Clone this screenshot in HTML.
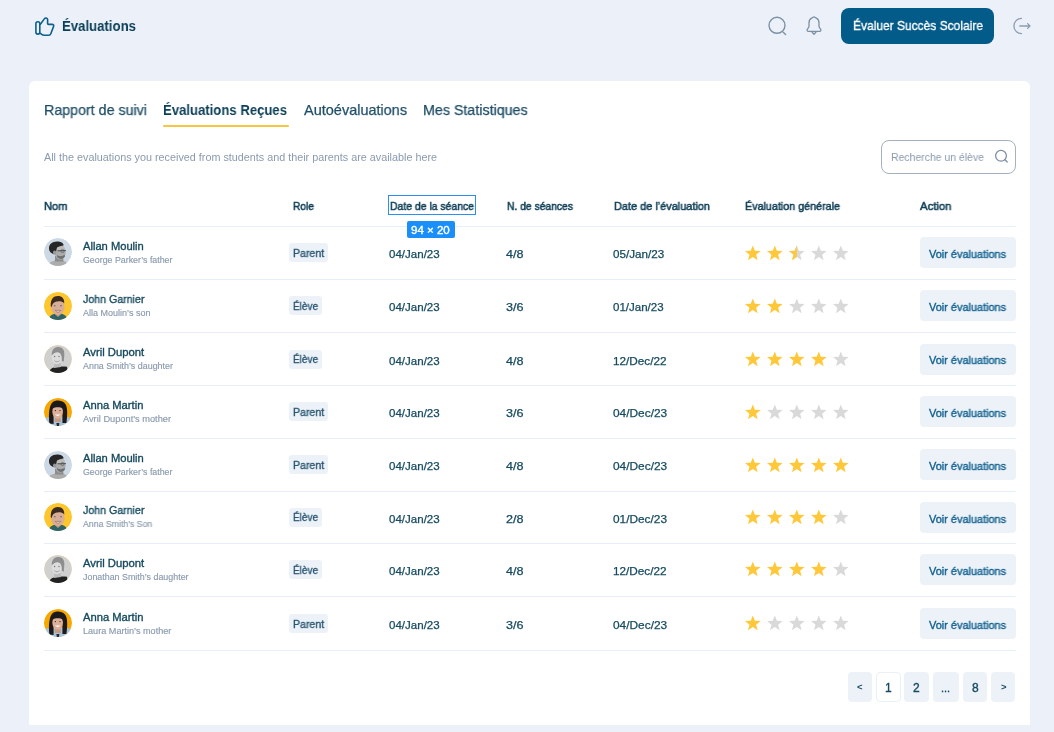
<!DOCTYPE html>
<html><head><meta charset="utf-8"><style>
html,body{margin:0;padding:0;}
body{width:1054px;height:732px;position:relative;overflow:hidden;background:#ECF1F9;font-family:"Liberation Sans",sans-serif;}
.t{position:absolute;white-space:nowrap;will-change:transform;}
.r{position:absolute;}
.a{position:absolute;overflow:visible;}
</style></head><body>
<svg class="a" style="left:32px;top:14px" width="26" height="24" viewBox="0 0 26 24"><g fill="none" stroke="#0D5F8B" stroke-width="1.6" stroke-linejoin="round" stroke-linecap="round"><rect x="3.9" y="7.7" width="3.9" height="12.4" rx="1.9"/><path d="M8.4 10.2 L12.3 4.9 C13.2 3.5 15.4 3.6 15.6 5.4 L15.6 9.4 Q15.6 10.4 16.6 10.4 L20.3 10.4 C21.4 10.4 22 11.4 21.6 12.4 L18.8 19.8 C18.4 20.8 17.7 21.3 16.8 21.3 L12.2 21.3 C11.2 21.3 10.4 21 9.7 20.4 L8.4 19.4"/></g></svg>
<div class="t" style="left:62.00px;top:16.30px;font-size:15px;line-height:19px;font-weight:700;color:#0B3E57;letter-spacing:0.000px;transform:scaleX(0.8786);transform-origin:0 0;">Évaluations</div>
<svg class="a" style="left:766px;top:15px" width="24" height="24" viewBox="0 0 24 24"><g fill="none" stroke="#7D90A6" stroke-width="1.4" stroke-linecap="round"><circle cx="11" cy="10.3" r="8"/><path d="M17.2 17.2 L19.6 19.6"/></g></svg>
<svg class="a" style="left:804px;top:15px" width="20" height="22" viewBox="0 0 20 22"><g fill="none" stroke="#7D90A6" stroke-width="1.3" stroke-linejoin="round"><path d="M10 1.9 C9.1 1.9 8.7 2.7 7.7 3.1 C5.8 3.9 5 5.6 5 8 L5 11.2 C5 12.8 3.4 13.6 3.1 14.8 C2.9 15.8 3.7 16.3 5 16.3 L15 16.3 C16.3 16.3 17.1 15.8 16.9 14.8 C16.6 13.6 15 12.8 15 11.2 L15 8 C15 5.6 14.2 3.9 12.3 3.1 C11.3 2.7 10.9 1.9 10 1.9 Z"/><path d="M7.6 16.5 L10 19.3 L12.4 16.5"/></g></svg>
<div class="r" style="left:841px;top:8px;width:153px;height:36px;background:#035B89;border-radius:8px;"></div>
<div class="t" style="left:853.40px;top:17.80px;font-size:13px;line-height:16px;font-weight:400;color:#FFFFFF;letter-spacing:0.000px;-webkit-text-stroke:0.35px #FFFFFF;transform:scaleX(0.9225);transform-origin:0 0;">Évaluer Succès Scolaire</div>
<svg class="a" style="left:1011px;top:15px" width="22" height="22" viewBox="0 0 22 22"><g fill="none" stroke="#8C9CB0" stroke-width="1.3" stroke-linecap="round" stroke-linejoin="round"><path d="M10.5 3.4 A7.6 7.6 0 1 0 10.5 18.6"/><path d="M8.8 11 L19 11 M16.6 8.6 L19 11 L16.6 13.4"/></g></svg>
<div class="r" style="left:28.9px;top:80.9px;width:1001.6px;height:644.1px;background:#FFFFFF;border-radius:6px;border-bottom-left-radius:0;border-bottom-right-radius:0;"></div>
<div class="t" style="left:44.40px;top:101.18px;font-size:14.5px;line-height:18px;font-weight:400;color:#1F4D66;letter-spacing:0.000px;-webkit-text-stroke:0.25px #1F4D66;transform:scaleX(0.9832);transform-origin:0 0;">Rapport de suivi</div>
<div class="t" style="left:163.30px;top:101.18px;font-size:14.5px;line-height:18px;font-weight:700;color:#0B3E57;letter-spacing:0.000px;transform:scaleX(0.9049);transform-origin:0 0;">Évaluations Reçues</div>
<div class="t" style="left:303.80px;top:101.18px;font-size:14.5px;line-height:18px;font-weight:400;color:#1F4D66;letter-spacing:0.000px;-webkit-text-stroke:0.25px #1F4D66;transform:scaleX(0.9984);transform-origin:0 0;">Autoévaluations</div>
<div class="t" style="left:422.80px;top:101.18px;font-size:14.5px;line-height:18px;font-weight:400;color:#1F4D66;letter-spacing:0.000px;-webkit-text-stroke:0.25px #1F4D66;transform:scaleX(0.9835);transform-origin:0 0;">Mes Statistiques</div>
<div class="r" style="left:163px;top:125px;width:125.5px;height:2px;background:#F7C53F;border-radius:1px;"></div>
<div class="t" style="left:44.20px;top:150.76px;font-size:10.5px;line-height:13px;font-weight:400;color:#8A9AAE;letter-spacing:0.000px;transform:scaleX(1.0280);transform-origin:0 0;">All the evaluations you received from students and their parents are available here</div>
<div class="r" style="left:881px;top:139.5px;width:135px;height:34px;background:#FFFFFF;border-radius:8px;box-sizing:border-box;border:1px solid #A3B1C1;"></div>
<div class="t" style="left:891.30px;top:150.29px;font-size:11px;line-height:14px;font-weight:400;color:#8A9AAE;letter-spacing:0.000px;transform:scaleX(0.9505);transform-origin:0 0;">Recherche un élève</div>
<svg class="a" style="left:993px;top:148px" width="17" height="17" viewBox="0 0 17 17"><g fill="none" stroke="#7D90A6" stroke-width="1.3" stroke-linecap="round"><circle cx="8" cy="7.8" r="5.4"/><path d="M12 11.8 L14.2 14"/></g></svg>
<div class="t" style="left:44.10px;top:199.12px;font-size:11.5px;line-height:14px;font-weight:400;color:#113F57;letter-spacing:0.000px;-webkit-text-stroke:0.55px #113F57;transform:scaleX(0.9644);transform-origin:0 0;">Nom</div>
<div class="t" style="left:292.60px;top:199.12px;font-size:11.5px;line-height:14px;font-weight:400;color:#113F57;letter-spacing:0.000px;-webkit-text-stroke:0.55px #113F57;transform:scaleX(0.8886);transform-origin:0 0;">Role</div>
<div class="t" style="left:390.00px;top:199.12px;font-size:11.5px;line-height:14px;font-weight:400;color:#113F57;letter-spacing:0.000px;-webkit-text-stroke:0.55px #113F57;transform:scaleX(0.9062);transform-origin:0 0;">Date de la séance</div>
<div class="t" style="left:506.70px;top:199.12px;font-size:11.5px;line-height:14px;font-weight:400;color:#113F57;letter-spacing:0.000px;-webkit-text-stroke:0.55px #113F57;transform:scaleX(0.8974);transform-origin:0 0;">N. de séances</div>
<div class="t" style="left:613.50px;top:199.12px;font-size:11.5px;line-height:14px;font-weight:400;color:#113F57;letter-spacing:0.000px;-webkit-text-stroke:0.55px #113F57;transform:scaleX(0.9502);transform-origin:0 0;">Date de l’évaluation</div>
<div class="t" style="left:744.80px;top:199.12px;font-size:11.5px;line-height:14px;font-weight:400;color:#113F57;letter-spacing:0.000px;-webkit-text-stroke:0.55px #113F57;transform:scaleX(0.9345);transform-origin:0 0;">Évaluation générale</div>
<div class="t" style="left:920.30px;top:199.12px;font-size:11.5px;line-height:14px;font-weight:400;color:#113F57;letter-spacing:0.000px;-webkit-text-stroke:0.55px #113F57;transform:scaleX(0.9822);transform-origin:0 0;">Action</div>
<div class="r" style="left:388px;top:195px;width:88px;height:20px;background:transparent;border-radius:0px;box-sizing:border-box;border:1px solid #2B8EF0;"></div>
<div class="r" style="left:44px;top:226px;width:972px;height:1px;background:#E6EEF9;border-radius:0px;"></div>
<div class="r" style="left:44px;top:279px;width:972px;height:1px;background:#E6EEF9;border-radius:0px;"></div>
<div class="r" style="left:44px;top:332px;width:972px;height:1px;background:#E6EEF9;border-radius:0px;"></div>
<div class="r" style="left:44px;top:385px;width:972px;height:1px;background:#E6EEF9;border-radius:0px;"></div>
<div class="r" style="left:44px;top:438px;width:972px;height:1px;background:#E6EEF9;border-radius:0px;"></div>
<div class="r" style="left:44px;top:491px;width:972px;height:1px;background:#E6EEF9;border-radius:0px;"></div>
<div class="r" style="left:44px;top:543px;width:972px;height:1px;background:#E6EEF9;border-radius:0px;"></div>
<div class="r" style="left:44px;top:596px;width:972px;height:1px;background:#E6EEF9;border-radius:0px;"></div>
<div class="r" style="left:44px;top:650px;width:972px;height:1px;background:#E6EEF9;border-radius:0px;"></div>
<svg class="a" style="left:44px;top:238.40px" width="28" height="28" viewBox="0 0 28 28"><clipPath id="av34"><circle cx="14" cy="14" r="14"/></clipPath><g clip-path="url(#av34)"><circle cx="14" cy="14" r="14" fill="#CCD9E5"/><path d="M3.5 28 C4.5 25 7.5 23 11 22.5 L19 22.5 C21.5 23 23.5 25 24 28 Z" fill="#ADADAD"/><path d="M11 18 L19 18 L19.5 23.5 L11 23.5 Z" fill="#8C8C8C"/><ellipse cx="16.2" cy="14.3" rx="5.4" ry="7.4" fill="#ABABAB"/><path d="M13 18.5 C15 21.8 19 21.8 21 18.2 L20.6 16.8 C18.5 18.6 15 18.6 13 17 Z" fill="#707070"/><path d="M5 11 C4.8 6.5 8 3.6 13 3.6 C16.5 3.6 19.6 5 19.6 7.6 C17.5 7.8 14.4 8.6 12.6 10.6 L11.6 16 C9.6 16.5 5.4 15 5 11 Z" fill="#262626"/><ellipse cx="10.6" cy="14.6" rx="1.6" ry="2.2" fill="#9A9A9A"/><path d="M13 9.6 C15 8.4 18.5 8.2 20.4 9.4 L20.6 12 L13 12 Z" fill="#BDBDBD"/><path d="M13.6 12.8 L22 12.6" stroke="#3A3A3A" stroke-width="0.8"/><circle cx="18.5" cy="13" r="1.6" fill="none" stroke="#555" stroke-width="0.6"/></g></svg>
<div class="t" style="left:82.50px;top:238.89px;font-size:11px;line-height:14px;font-weight:400;color:#164A5F;letter-spacing:0.000px;-webkit-text-stroke:0.35px #164A5F;transform:scaleX(1.0142);transform-origin:0 0;">Allan Moulin</div>
<div class="t" style="left:82.50px;top:254.85px;font-size:8.8px;line-height:11px;font-weight:400;color:#8A9AAE;letter-spacing:0.000px;-webkit-text-stroke:0.15px #8A9AAE;transform:scaleX(1.0035);transform-origin:0 0;">George Parker’s father</div>
<div class="r" style="left:289px;top:243px;width:39px;height:19px;background:#EDF2F9;border-radius:3px;"></div>
<div class="t" style="left:292.80px;top:245.79px;font-size:11px;line-height:14px;font-weight:400;color:#2A5670;letter-spacing:0.000px;-webkit-text-stroke:0.35px #2A5670;transform:scaleX(0.9631);transform-origin:0 0;">Parent</div>
<div class="t" style="left:389.30px;top:247.19px;font-size:11px;line-height:14px;font-weight:400;color:#164A5F;letter-spacing:0.000px;-webkit-text-stroke:0.25px #164A5F;transform:scaleX(1.0487);transform-origin:0 0;">04/Jan/23</div>
<div class="t" style="left:506.10px;top:247.19px;font-size:11px;line-height:14px;font-weight:400;color:#164A5F;letter-spacing:0.000px;-webkit-text-stroke:0.25px #164A5F;transform:scaleX(1.1445);transform-origin:0 0;">4/8</div>
<div class="t" style="left:612.80px;top:247.19px;font-size:11px;line-height:14px;font-weight:400;color:#164A5F;letter-spacing:0.000px;-webkit-text-stroke:0.25px #164A5F;transform:scaleX(1.0591);transform-origin:0 0;">05/Jan/23</div>
<svg class="a" style="left:740px;top:244.60px" width="120" height="20" viewBox="0 0 120 20"><path d="M12.80,0.40 L14.86,5.77 L20.60,6.07 L16.13,9.68 L17.62,15.23 L12.80,12.10 L7.98,15.23 L9.47,9.68 L5.00,6.07 L10.74,5.77 Z" fill="#FFC83A"/><path d="M34.80,0.40 L36.86,5.77 L42.60,6.07 L38.13,9.68 L39.62,15.23 L34.80,12.10 L29.98,15.23 L31.47,9.68 L27.00,6.07 L32.74,5.77 Z" fill="#FFC83A"/><path d="M56.80,0.40 L58.86,5.77 L64.60,6.07 L60.13,9.68 L61.62,15.23 L56.80,12.10 L51.98,15.23 L53.47,9.68 L49.00,6.07 L54.74,5.77 Z" fill="#D9D9D9"/><clipPath id="h0"><rect x="0" y="0" width="56.80" height="20"/></clipPath><path d="M56.80,0.40 L58.86,5.77 L64.60,6.07 L60.13,9.68 L61.62,15.23 L56.80,12.10 L51.98,15.23 L53.47,9.68 L49.00,6.07 L54.74,5.77 Z" fill="#FFC83A" clip-path="url(#h0)"/><path d="M78.80,0.40 L80.86,5.77 L86.60,6.07 L82.13,9.68 L83.62,15.23 L78.80,12.10 L73.98,15.23 L75.47,9.68 L71.00,6.07 L76.74,5.77 Z" fill="#D9D9D9"/><path d="M100.80,0.40 L102.86,5.77 L108.60,6.07 L104.13,9.68 L105.62,15.23 L100.80,12.10 L95.98,15.23 L97.47,9.68 L93.00,6.07 L98.74,5.77 Z" fill="#D9D9D9"/></svg>
<div class="r" style="left:920px;top:237px;width:96px;height:31px;background:#EDF2F9;border-radius:4px;"></div>
<div class="t" style="left:929.00px;top:246.99px;font-size:11px;line-height:14px;font-weight:400;color:#0D5E8C;letter-spacing:0.000px;-webkit-text-stroke:0.35px #0D5E8C;transform:scaleX(0.9915);transform-origin:0 0;">Voir évaluations</div>
<svg class="a" style="left:44px;top:291.70px" width="28" height="28" viewBox="0 0 28 28"><clipPath id="av45"><circle cx="14" cy="14" r="14"/></clipPath><g clip-path="url(#av45)"><circle cx="14" cy="14" r="14" fill="#FCC62C"/><path d="M4.5 28 C5 24.5 7.5 22.5 10.5 21.8 L17.5 21.8 C20.5 22.5 23 24.5 23.5 28 Z" fill="#2C6468"/><path d="M10.5 21.8 L14 25 L17.5 21.8 L16.5 20 L11.5 20 Z" fill="#C9977F"/><ellipse cx="13.8" cy="15" rx="6.8" ry="7.9" fill="#D9AD96"/><path d="M6.8 14.5 C6.2 7 9.5 4 13.8 4 C18 4 20.6 6.5 20.2 11.5 C18.5 9.5 16 9.2 13.8 9.4 C11 9.6 8.5 10.5 7.8 14.8 Z" fill="#3A2A22"/><path d="M11.2 18.4 C12.8 20.6 15.2 20.6 16.8 18.4 Z" fill="#F2E6E0" stroke="#7A4E44" stroke-width="0.5"/><circle cx="10.8" cy="13.8" r="0.8" fill="#4F6A7A"/><circle cx="17" cy="13.8" r="0.8" fill="#4F6A7A"/></g></svg>
<div class="t" style="left:82.50px;top:292.19px;font-size:11px;line-height:14px;font-weight:400;color:#164A5F;letter-spacing:0.000px;-webkit-text-stroke:0.35px #164A5F;transform:scaleX(0.9657);transform-origin:0 0;">John Garnier</div>
<div class="t" style="left:82.50px;top:308.15px;font-size:8.8px;line-height:11px;font-weight:400;color:#8A9AAE;letter-spacing:0.000px;-webkit-text-stroke:0.15px #8A9AAE;transform:scaleX(1.0248);transform-origin:0 0;">Alla Moulin’s son</div>
<div class="r" style="left:289px;top:296px;width:33px;height:19px;background:#EDF2F9;border-radius:3px;"></div>
<div class="t" style="left:292.80px;top:299.09px;font-size:11px;line-height:14px;font-weight:400;color:#2A5670;letter-spacing:0.000px;-webkit-text-stroke:0.35px #2A5670;transform:scaleX(0.9091);transform-origin:0 0;">Élève</div>
<div class="t" style="left:389.30px;top:300.49px;font-size:11px;line-height:14px;font-weight:400;color:#164A5F;letter-spacing:0.000px;-webkit-text-stroke:0.25px #164A5F;transform:scaleX(1.0487);transform-origin:0 0;">04/Jan/23</div>
<div class="t" style="left:506.10px;top:300.49px;font-size:11px;line-height:14px;font-weight:400;color:#164A5F;letter-spacing:0.000px;-webkit-text-stroke:0.25px #164A5F;transform:scaleX(1.1445);transform-origin:0 0;">3/6</div>
<div class="t" style="left:612.80px;top:300.49px;font-size:11px;line-height:14px;font-weight:400;color:#164A5F;letter-spacing:0.000px;-webkit-text-stroke:0.25px #164A5F;transform:scaleX(1.0466);transform-origin:0 0;">01/Jan/23</div>
<svg class="a" style="left:740px;top:297.90px" width="120" height="20" viewBox="0 0 120 20"><path d="M12.80,0.40 L14.86,5.77 L20.60,6.07 L16.13,9.68 L17.62,15.23 L12.80,12.10 L7.98,15.23 L9.47,9.68 L5.00,6.07 L10.74,5.77 Z" fill="#FFC83A"/><path d="M34.80,0.40 L36.86,5.77 L42.60,6.07 L38.13,9.68 L39.62,15.23 L34.80,12.10 L29.98,15.23 L31.47,9.68 L27.00,6.07 L32.74,5.77 Z" fill="#FFC83A"/><path d="M56.80,0.40 L58.86,5.77 L64.60,6.07 L60.13,9.68 L61.62,15.23 L56.80,12.10 L51.98,15.23 L53.47,9.68 L49.00,6.07 L54.74,5.77 Z" fill="#D9D9D9"/><path d="M78.80,0.40 L80.86,5.77 L86.60,6.07 L82.13,9.68 L83.62,15.23 L78.80,12.10 L73.98,15.23 L75.47,9.68 L71.00,6.07 L76.74,5.77 Z" fill="#D9D9D9"/><path d="M100.80,0.40 L102.86,5.77 L108.60,6.07 L104.13,9.68 L105.62,15.23 L100.80,12.10 L95.98,15.23 L97.47,9.68 L93.00,6.07 L98.74,5.77 Z" fill="#D9D9D9"/></svg>
<div class="r" style="left:920px;top:290px;width:96px;height:31px;background:#EDF2F9;border-radius:4px;"></div>
<div class="t" style="left:929.00px;top:300.29px;font-size:11px;line-height:14px;font-weight:400;color:#0D5E8C;letter-spacing:0.000px;-webkit-text-stroke:0.35px #0D5E8C;transform:scaleX(0.9915);transform-origin:0 0;">Voir évaluations</div>
<svg class="a" style="left:44px;top:344.80px" width="28" height="28" viewBox="0 0 28 28"><clipPath id="av56"><circle cx="14" cy="14" r="14"/></clipPath><g clip-path="url(#av56)"><circle cx="14" cy="14" r="14" fill="#E8D6AE"/><circle cx="14" cy="14" r="13.4" fill="#D0D0D0"/><path d="M4.5 28 C5.5 24.5 7.5 22.8 10 22.4 C14 21.6 18 21.4 23 21.8 L24 28 Z" fill="#222222"/><path d="M10.5 17.5 L16.5 17.5 L17 22 L10 23 Z" fill="#BBBBBB"/><ellipse cx="12.9" cy="12.2" rx="5.2" ry="7" fill="#DCDCDC"/><path d="M7.8 10.5 C7.4 4.5 10.6 2 14.4 2 C18.4 2 20.8 5 20.3 10 L19.8 16.5 L17.8 16 C18.2 11.5 17 7.2 13.4 7.2 C11 7.2 9 8.6 7.8 10.5 Z" fill="#8E8E8E"/><path d="M10.4 15.6 C11.8 17.2 14.2 17.2 15.6 15.6" stroke="#9A9A9A" stroke-width="0.9" fill="none"/><circle cx="10.6" cy="11.5" r="0.7" fill="#777"/><circle cx="15" cy="11.5" r="0.7" fill="#777"/></g></svg>
<div class="t" style="left:82.50px;top:345.29px;font-size:11px;line-height:14px;font-weight:400;color:#164A5F;letter-spacing:0.000px;-webkit-text-stroke:0.35px #164A5F;transform:scaleX(1.0246);transform-origin:0 0;">Avril Dupont</div>
<div class="t" style="left:82.50px;top:361.25px;font-size:8.8px;line-height:11px;font-weight:400;color:#8A9AAE;letter-spacing:0.000px;-webkit-text-stroke:0.15px #8A9AAE;transform:scaleX(1.0126);transform-origin:0 0;">Anna Smith’s daughter</div>
<div class="r" style="left:289px;top:350px;width:33px;height:19px;background:#EDF2F9;border-radius:3px;"></div>
<div class="t" style="left:292.80px;top:352.19px;font-size:11px;line-height:14px;font-weight:400;color:#2A5670;letter-spacing:0.000px;-webkit-text-stroke:0.35px #2A5670;transform:scaleX(0.9091);transform-origin:0 0;">Élève</div>
<div class="t" style="left:389.30px;top:353.59px;font-size:11px;line-height:14px;font-weight:400;color:#164A5F;letter-spacing:0.000px;-webkit-text-stroke:0.25px #164A5F;transform:scaleX(1.0487);transform-origin:0 0;">04/Jan/23</div>
<div class="t" style="left:506.10px;top:353.59px;font-size:11px;line-height:14px;font-weight:400;color:#164A5F;letter-spacing:0.000px;-webkit-text-stroke:0.25px #164A5F;transform:scaleX(1.1445);transform-origin:0 0;">4/8</div>
<div class="t" style="left:612.80px;top:353.59px;font-size:11px;line-height:14px;font-weight:400;color:#164A5F;letter-spacing:0.000px;-webkit-text-stroke:0.25px #164A5F;transform:scaleX(1.0686);transform-origin:0 0;">12/Dec/22</div>
<svg class="a" style="left:740px;top:351.00px" width="120" height="20" viewBox="0 0 120 20"><path d="M12.80,0.40 L14.86,5.77 L20.60,6.07 L16.13,9.68 L17.62,15.23 L12.80,12.10 L7.98,15.23 L9.47,9.68 L5.00,6.07 L10.74,5.77 Z" fill="#FFC83A"/><path d="M34.80,0.40 L36.86,5.77 L42.60,6.07 L38.13,9.68 L39.62,15.23 L34.80,12.10 L29.98,15.23 L31.47,9.68 L27.00,6.07 L32.74,5.77 Z" fill="#FFC83A"/><path d="M56.80,0.40 L58.86,5.77 L64.60,6.07 L60.13,9.68 L61.62,15.23 L56.80,12.10 L51.98,15.23 L53.47,9.68 L49.00,6.07 L54.74,5.77 Z" fill="#FFC83A"/><path d="M78.80,0.40 L80.86,5.77 L86.60,6.07 L82.13,9.68 L83.62,15.23 L78.80,12.10 L73.98,15.23 L75.47,9.68 L71.00,6.07 L76.74,5.77 Z" fill="#FFC83A"/><path d="M100.80,0.40 L102.86,5.77 L108.60,6.07 L104.13,9.68 L105.62,15.23 L100.80,12.10 L95.98,15.23 L97.47,9.68 L93.00,6.07 L98.74,5.77 Z" fill="#D9D9D9"/></svg>
<div class="r" style="left:920px;top:344px;width:96px;height:31px;background:#EDF2F9;border-radius:4px;"></div>
<div class="t" style="left:929.00px;top:353.39px;font-size:11px;line-height:14px;font-weight:400;color:#0D5E8C;letter-spacing:0.000px;-webkit-text-stroke:0.35px #0D5E8C;transform:scaleX(0.9915);transform-origin:0 0;">Voir évaluations</div>
<svg class="a" style="left:44px;top:397.70px" width="28" height="28" viewBox="0 0 28 28"><clipPath id="av67"><circle cx="14" cy="14" r="14"/></clipPath><g clip-path="url(#av67)"><circle cx="14" cy="14" r="14" fill="#F7A700"/><path d="M0 28 L0 20.5 C3 19 6 18.7 9 18.7 L19 18.7 C22 18.7 25 19 28 20.5 L28 28 Z" fill="#A6C3DC"/><path d="M5.4 25.5 C4.4 17 5 8 8.4 4.5 C11.6 1.6 17.8 2 20.8 5.2 C23.8 8.4 23.6 17 22.4 25 L18.4 25 L18.4 12 L9.6 12 L9.6 26 Z" fill="#1C1A1B"/><path d="M11 19 L16.5 19 L17 24 L10.5 24 Z" fill="#C99A82"/><ellipse cx="13.6" cy="13.8" rx="5.3" ry="7" fill="#DDB09A"/><path d="M8.4 10.5 C9 7 11.4 5.8 14 5.8 C16.4 5.8 18.6 7.4 19 10.5 C16.5 8.8 11.5 8.6 8.4 10.5 Z" fill="#1C1A1B"/><path d="M11 16.6 C12.6 18.4 14.8 18.4 16.4 16.6 Z" fill="#FFFFFF"/><circle cx="11.4" cy="12.6" r="0.7" fill="#3A2A22"/><circle cx="16" cy="12.6" r="0.7" fill="#3A2A22"/><path d="M12.4 25 L15.4 25 L15 28 L12.8 28 Z" fill="#2A2A30"/></g></svg>
<div class="t" style="left:82.50px;top:398.19px;font-size:11px;line-height:14px;font-weight:400;color:#164A5F;letter-spacing:0.000px;-webkit-text-stroke:0.35px #164A5F;transform:scaleX(1.0187);transform-origin:0 0;">Anna Martin</div>
<div class="t" style="left:82.50px;top:414.15px;font-size:8.8px;line-height:11px;font-weight:400;color:#8A9AAE;letter-spacing:0.000px;-webkit-text-stroke:0.15px #8A9AAE;transform:scaleX(1.0511);transform-origin:0 0;">Avril Dupont’s mother</div>
<div class="r" style="left:289px;top:402px;width:39px;height:19px;background:#EDF2F9;border-radius:3px;"></div>
<div class="t" style="left:292.80px;top:405.09px;font-size:11px;line-height:14px;font-weight:400;color:#2A5670;letter-spacing:0.000px;-webkit-text-stroke:0.35px #2A5670;transform:scaleX(0.9631);transform-origin:0 0;">Parent</div>
<div class="t" style="left:389.30px;top:406.49px;font-size:11px;line-height:14px;font-weight:400;color:#164A5F;letter-spacing:0.000px;-webkit-text-stroke:0.25px #164A5F;transform:scaleX(1.0487);transform-origin:0 0;">04/Jan/23</div>
<div class="t" style="left:506.10px;top:406.49px;font-size:11px;line-height:14px;font-weight:400;color:#164A5F;letter-spacing:0.000px;-webkit-text-stroke:0.25px #164A5F;transform:scaleX(1.1445);transform-origin:0 0;">3/6</div>
<div class="t" style="left:612.80px;top:406.49px;font-size:11px;line-height:14px;font-weight:400;color:#164A5F;letter-spacing:0.000px;-webkit-text-stroke:0.25px #164A5F;transform:scaleX(1.0805);transform-origin:0 0;">04/Dec/23</div>
<svg class="a" style="left:740px;top:403.90px" width="120" height="20" viewBox="0 0 120 20"><path d="M12.80,0.40 L14.86,5.77 L20.60,6.07 L16.13,9.68 L17.62,15.23 L12.80,12.10 L7.98,15.23 L9.47,9.68 L5.00,6.07 L10.74,5.77 Z" fill="#FFC83A"/><path d="M34.80,0.40 L36.86,5.77 L42.60,6.07 L38.13,9.68 L39.62,15.23 L34.80,12.10 L29.98,15.23 L31.47,9.68 L27.00,6.07 L32.74,5.77 Z" fill="#D9D9D9"/><path d="M56.80,0.40 L58.86,5.77 L64.60,6.07 L60.13,9.68 L61.62,15.23 L56.80,12.10 L51.98,15.23 L53.47,9.68 L49.00,6.07 L54.74,5.77 Z" fill="#D9D9D9"/><path d="M78.80,0.40 L80.86,5.77 L86.60,6.07 L82.13,9.68 L83.62,15.23 L78.80,12.10 L73.98,15.23 L75.47,9.68 L71.00,6.07 L76.74,5.77 Z" fill="#D9D9D9"/><path d="M100.80,0.40 L102.86,5.77 L108.60,6.07 L104.13,9.68 L105.62,15.23 L100.80,12.10 L95.98,15.23 L97.47,9.68 L93.00,6.07 L98.74,5.77 Z" fill="#D9D9D9"/></svg>
<div class="r" style="left:920px;top:396px;width:96px;height:31px;background:#EDF2F9;border-radius:4px;"></div>
<div class="t" style="left:929.00px;top:406.29px;font-size:11px;line-height:14px;font-weight:400;color:#0D5E8C;letter-spacing:0.000px;-webkit-text-stroke:0.35px #0D5E8C;transform:scaleX(0.9915);transform-origin:0 0;">Voir évaluations</div>
<svg class="a" style="left:44px;top:450.50px" width="28" height="28" viewBox="0 0 28 28"><clipPath id="av78"><circle cx="14" cy="14" r="14"/></clipPath><g clip-path="url(#av78)"><circle cx="14" cy="14" r="14" fill="#CCD9E5"/><path d="M3.5 28 C4.5 25 7.5 23 11 22.5 L19 22.5 C21.5 23 23.5 25 24 28 Z" fill="#ADADAD"/><path d="M11 18 L19 18 L19.5 23.5 L11 23.5 Z" fill="#8C8C8C"/><ellipse cx="16.2" cy="14.3" rx="5.4" ry="7.4" fill="#ABABAB"/><path d="M13 18.5 C15 21.8 19 21.8 21 18.2 L20.6 16.8 C18.5 18.6 15 18.6 13 17 Z" fill="#707070"/><path d="M5 11 C4.8 6.5 8 3.6 13 3.6 C16.5 3.6 19.6 5 19.6 7.6 C17.5 7.8 14.4 8.6 12.6 10.6 L11.6 16 C9.6 16.5 5.4 15 5 11 Z" fill="#262626"/><ellipse cx="10.6" cy="14.6" rx="1.6" ry="2.2" fill="#9A9A9A"/><path d="M13 9.6 C15 8.4 18.5 8.2 20.4 9.4 L20.6 12 L13 12 Z" fill="#BDBDBD"/><path d="M13.6 12.8 L22 12.6" stroke="#3A3A3A" stroke-width="0.8"/><circle cx="18.5" cy="13" r="1.6" fill="none" stroke="#555" stroke-width="0.6"/></g></svg>
<div class="t" style="left:82.50px;top:450.99px;font-size:11px;line-height:14px;font-weight:400;color:#164A5F;letter-spacing:0.000px;-webkit-text-stroke:0.35px #164A5F;transform:scaleX(1.0142);transform-origin:0 0;">Allan Moulin</div>
<div class="t" style="left:82.50px;top:466.95px;font-size:8.8px;line-height:11px;font-weight:400;color:#8A9AAE;letter-spacing:0.000px;-webkit-text-stroke:0.15px #8A9AAE;transform:scaleX(1.0035);transform-origin:0 0;">George Parker’s father</div>
<div class="r" style="left:289px;top:455px;width:39px;height:19px;background:#EDF2F9;border-radius:3px;"></div>
<div class="t" style="left:292.80px;top:457.89px;font-size:11px;line-height:14px;font-weight:400;color:#2A5670;letter-spacing:0.000px;-webkit-text-stroke:0.35px #2A5670;transform:scaleX(0.9631);transform-origin:0 0;">Parent</div>
<div class="t" style="left:389.30px;top:459.29px;font-size:11px;line-height:14px;font-weight:400;color:#164A5F;letter-spacing:0.000px;-webkit-text-stroke:0.25px #164A5F;transform:scaleX(1.0487);transform-origin:0 0;">04/Jan/23</div>
<div class="t" style="left:506.10px;top:459.29px;font-size:11px;line-height:14px;font-weight:400;color:#164A5F;letter-spacing:0.000px;-webkit-text-stroke:0.25px #164A5F;transform:scaleX(1.1445);transform-origin:0 0;">4/8</div>
<div class="t" style="left:612.80px;top:459.29px;font-size:11px;line-height:14px;font-weight:400;color:#164A5F;letter-spacing:0.000px;-webkit-text-stroke:0.25px #164A5F;transform:scaleX(1.0805);transform-origin:0 0;">04/Dec/23</div>
<svg class="a" style="left:740px;top:456.70px" width="120" height="20" viewBox="0 0 120 20"><path d="M12.80,0.40 L14.86,5.77 L20.60,6.07 L16.13,9.68 L17.62,15.23 L12.80,12.10 L7.98,15.23 L9.47,9.68 L5.00,6.07 L10.74,5.77 Z" fill="#FFC83A"/><path d="M34.80,0.40 L36.86,5.77 L42.60,6.07 L38.13,9.68 L39.62,15.23 L34.80,12.10 L29.98,15.23 L31.47,9.68 L27.00,6.07 L32.74,5.77 Z" fill="#FFC83A"/><path d="M56.80,0.40 L58.86,5.77 L64.60,6.07 L60.13,9.68 L61.62,15.23 L56.80,12.10 L51.98,15.23 L53.47,9.68 L49.00,6.07 L54.74,5.77 Z" fill="#FFC83A"/><path d="M78.80,0.40 L80.86,5.77 L86.60,6.07 L82.13,9.68 L83.62,15.23 L78.80,12.10 L73.98,15.23 L75.47,9.68 L71.00,6.07 L76.74,5.77 Z" fill="#FFC83A"/><path d="M100.80,0.40 L102.86,5.77 L108.60,6.07 L104.13,9.68 L105.62,15.23 L100.80,12.10 L95.98,15.23 L97.47,9.68 L93.00,6.07 L98.74,5.77 Z" fill="#FFC83A"/></svg>
<div class="r" style="left:920px;top:449px;width:96px;height:31px;background:#EDF2F9;border-radius:4px;"></div>
<div class="t" style="left:929.00px;top:459.09px;font-size:11px;line-height:14px;font-weight:400;color:#0D5E8C;letter-spacing:0.000px;-webkit-text-stroke:0.35px #0D5E8C;transform:scaleX(0.9915);transform-origin:0 0;">Voir évaluations</div>
<svg class="a" style="left:44px;top:503.00px" width="28" height="28" viewBox="0 0 28 28"><clipPath id="av89"><circle cx="14" cy="14" r="14"/></clipPath><g clip-path="url(#av89)"><circle cx="14" cy="14" r="14" fill="#FCC62C"/><path d="M4.5 28 C5 24.5 7.5 22.5 10.5 21.8 L17.5 21.8 C20.5 22.5 23 24.5 23.5 28 Z" fill="#2C6468"/><path d="M10.5 21.8 L14 25 L17.5 21.8 L16.5 20 L11.5 20 Z" fill="#C9977F"/><ellipse cx="13.8" cy="15" rx="6.8" ry="7.9" fill="#D9AD96"/><path d="M6.8 14.5 C6.2 7 9.5 4 13.8 4 C18 4 20.6 6.5 20.2 11.5 C18.5 9.5 16 9.2 13.8 9.4 C11 9.6 8.5 10.5 7.8 14.8 Z" fill="#3A2A22"/><path d="M11.2 18.4 C12.8 20.6 15.2 20.6 16.8 18.4 Z" fill="#F2E6E0" stroke="#7A4E44" stroke-width="0.5"/><circle cx="10.8" cy="13.8" r="0.8" fill="#4F6A7A"/><circle cx="17" cy="13.8" r="0.8" fill="#4F6A7A"/></g></svg>
<div class="t" style="left:82.50px;top:503.49px;font-size:11px;line-height:14px;font-weight:400;color:#164A5F;letter-spacing:0.000px;-webkit-text-stroke:0.35px #164A5F;transform:scaleX(0.9657);transform-origin:0 0;">John Garnier</div>
<div class="t" style="left:82.50px;top:519.45px;font-size:8.8px;line-height:11px;font-weight:400;color:#8A9AAE;letter-spacing:0.000px;-webkit-text-stroke:0.15px #8A9AAE;transform:scaleX(0.9931);transform-origin:0 0;">Anna Smith’s Son</div>
<div class="r" style="left:289px;top:508px;width:33px;height:19px;background:#EDF2F9;border-radius:3px;"></div>
<div class="t" style="left:292.80px;top:510.39px;font-size:11px;line-height:14px;font-weight:400;color:#2A5670;letter-spacing:0.000px;-webkit-text-stroke:0.35px #2A5670;transform:scaleX(0.9091);transform-origin:0 0;">Élève</div>
<div class="t" style="left:389.30px;top:511.79px;font-size:11px;line-height:14px;font-weight:400;color:#164A5F;letter-spacing:0.000px;-webkit-text-stroke:0.25px #164A5F;transform:scaleX(1.0487);transform-origin:0 0;">04/Jan/23</div>
<div class="t" style="left:506.10px;top:511.79px;font-size:11px;line-height:14px;font-weight:400;color:#164A5F;letter-spacing:0.000px;-webkit-text-stroke:0.25px #164A5F;transform:scaleX(1.1445);transform-origin:0 0;">2/8</div>
<div class="t" style="left:612.80px;top:511.79px;font-size:11px;line-height:14px;font-weight:400;color:#164A5F;letter-spacing:0.000px;-webkit-text-stroke:0.25px #164A5F;transform:scaleX(1.0766);transform-origin:0 0;">01/Dec/23</div>
<svg class="a" style="left:740px;top:509.20px" width="120" height="20" viewBox="0 0 120 20"><path d="M12.80,0.40 L14.86,5.77 L20.60,6.07 L16.13,9.68 L17.62,15.23 L12.80,12.10 L7.98,15.23 L9.47,9.68 L5.00,6.07 L10.74,5.77 Z" fill="#FFC83A"/><path d="M34.80,0.40 L36.86,5.77 L42.60,6.07 L38.13,9.68 L39.62,15.23 L34.80,12.10 L29.98,15.23 L31.47,9.68 L27.00,6.07 L32.74,5.77 Z" fill="#FFC83A"/><path d="M56.80,0.40 L58.86,5.77 L64.60,6.07 L60.13,9.68 L61.62,15.23 L56.80,12.10 L51.98,15.23 L53.47,9.68 L49.00,6.07 L54.74,5.77 Z" fill="#FFC83A"/><path d="M78.80,0.40 L80.86,5.77 L86.60,6.07 L82.13,9.68 L83.62,15.23 L78.80,12.10 L73.98,15.23 L75.47,9.68 L71.00,6.07 L76.74,5.77 Z" fill="#FFC83A"/><path d="M100.80,0.40 L102.86,5.77 L108.60,6.07 L104.13,9.68 L105.62,15.23 L100.80,12.10 L95.98,15.23 L97.47,9.68 L93.00,6.07 L98.74,5.77 Z" fill="#D9D9D9"/></svg>
<div class="r" style="left:920px;top:502px;width:96px;height:31px;background:#EDF2F9;border-radius:4px;"></div>
<div class="t" style="left:929.00px;top:511.59px;font-size:11px;line-height:14px;font-weight:400;color:#0D5E8C;letter-spacing:0.000px;-webkit-text-stroke:0.35px #0D5E8C;transform:scaleX(0.9915);transform-origin:0 0;">Voir évaluations</div>
<svg class="a" style="left:44px;top:555.20px" width="28" height="28" viewBox="0 0 28 28"><clipPath id="av100"><circle cx="14" cy="14" r="14"/></clipPath><g clip-path="url(#av100)"><circle cx="14" cy="14" r="14" fill="#E8D6AE"/><circle cx="14" cy="14" r="13.4" fill="#D0D0D0"/><path d="M4.5 28 C5.5 24.5 7.5 22.8 10 22.4 C14 21.6 18 21.4 23 21.8 L24 28 Z" fill="#222222"/><path d="M10.5 17.5 L16.5 17.5 L17 22 L10 23 Z" fill="#BBBBBB"/><ellipse cx="12.9" cy="12.2" rx="5.2" ry="7" fill="#DCDCDC"/><path d="M7.8 10.5 C7.4 4.5 10.6 2 14.4 2 C18.4 2 20.8 5 20.3 10 L19.8 16.5 L17.8 16 C18.2 11.5 17 7.2 13.4 7.2 C11 7.2 9 8.6 7.8 10.5 Z" fill="#8E8E8E"/><path d="M10.4 15.6 C11.8 17.2 14.2 17.2 15.6 15.6" stroke="#9A9A9A" stroke-width="0.9" fill="none"/><circle cx="10.6" cy="11.5" r="0.7" fill="#777"/><circle cx="15" cy="11.5" r="0.7" fill="#777"/></g></svg>
<div class="t" style="left:82.50px;top:555.69px;font-size:11px;line-height:14px;font-weight:400;color:#164A5F;letter-spacing:0.000px;-webkit-text-stroke:0.35px #164A5F;transform:scaleX(1.0246);transform-origin:0 0;">Avril Dupont</div>
<div class="t" style="left:82.50px;top:571.65px;font-size:8.8px;line-height:11px;font-weight:400;color:#8A9AAE;letter-spacing:0.000px;-webkit-text-stroke:0.15px #8A9AAE;transform:scaleX(1.0101);transform-origin:0 0;">Jonathan Smith’s daughter</div>
<div class="r" style="left:289px;top:560px;width:33px;height:19px;background:#EDF2F9;border-radius:3px;"></div>
<div class="t" style="left:292.80px;top:562.59px;font-size:11px;line-height:14px;font-weight:400;color:#2A5670;letter-spacing:0.000px;-webkit-text-stroke:0.35px #2A5670;transform:scaleX(0.9091);transform-origin:0 0;">Élève</div>
<div class="t" style="left:389.30px;top:563.99px;font-size:11px;line-height:14px;font-weight:400;color:#164A5F;letter-spacing:0.000px;-webkit-text-stroke:0.25px #164A5F;transform:scaleX(1.0487);transform-origin:0 0;">04/Jan/23</div>
<div class="t" style="left:506.10px;top:563.99px;font-size:11px;line-height:14px;font-weight:400;color:#164A5F;letter-spacing:0.000px;-webkit-text-stroke:0.25px #164A5F;transform:scaleX(1.1445);transform-origin:0 0;">4/8</div>
<div class="t" style="left:612.80px;top:563.99px;font-size:11px;line-height:14px;font-weight:400;color:#164A5F;letter-spacing:0.000px;-webkit-text-stroke:0.25px #164A5F;transform:scaleX(1.0686);transform-origin:0 0;">12/Dec/22</div>
<svg class="a" style="left:740px;top:561.40px" width="120" height="20" viewBox="0 0 120 20"><path d="M12.80,0.40 L14.86,5.77 L20.60,6.07 L16.13,9.68 L17.62,15.23 L12.80,12.10 L7.98,15.23 L9.47,9.68 L5.00,6.07 L10.74,5.77 Z" fill="#FFC83A"/><path d="M34.80,0.40 L36.86,5.77 L42.60,6.07 L38.13,9.68 L39.62,15.23 L34.80,12.10 L29.98,15.23 L31.47,9.68 L27.00,6.07 L32.74,5.77 Z" fill="#FFC83A"/><path d="M56.80,0.40 L58.86,5.77 L64.60,6.07 L60.13,9.68 L61.62,15.23 L56.80,12.10 L51.98,15.23 L53.47,9.68 L49.00,6.07 L54.74,5.77 Z" fill="#FFC83A"/><path d="M78.80,0.40 L80.86,5.77 L86.60,6.07 L82.13,9.68 L83.62,15.23 L78.80,12.10 L73.98,15.23 L75.47,9.68 L71.00,6.07 L76.74,5.77 Z" fill="#FFC83A"/><path d="M100.80,0.40 L102.86,5.77 L108.60,6.07 L104.13,9.68 L105.62,15.23 L100.80,12.10 L95.98,15.23 L97.47,9.68 L93.00,6.07 L98.74,5.77 Z" fill="#D9D9D9"/></svg>
<div class="r" style="left:920px;top:554px;width:96px;height:31px;background:#EDF2F9;border-radius:4px;"></div>
<div class="t" style="left:929.00px;top:563.79px;font-size:11px;line-height:14px;font-weight:400;color:#0D5E8C;letter-spacing:0.000px;-webkit-text-stroke:0.35px #0D5E8C;transform:scaleX(0.9915);transform-origin:0 0;">Voir évaluations</div>
<svg class="a" style="left:44px;top:609.20px" width="28" height="28" viewBox="0 0 28 28"><clipPath id="av111"><circle cx="14" cy="14" r="14"/></clipPath><g clip-path="url(#av111)"><circle cx="14" cy="14" r="14" fill="#F7A700"/><path d="M0 28 L0 20.5 C3 19 6 18.7 9 18.7 L19 18.7 C22 18.7 25 19 28 20.5 L28 28 Z" fill="#A6C3DC"/><path d="M5.4 25.5 C4.4 17 5 8 8.4 4.5 C11.6 1.6 17.8 2 20.8 5.2 C23.8 8.4 23.6 17 22.4 25 L18.4 25 L18.4 12 L9.6 12 L9.6 26 Z" fill="#1C1A1B"/><path d="M11 19 L16.5 19 L17 24 L10.5 24 Z" fill="#C99A82"/><ellipse cx="13.6" cy="13.8" rx="5.3" ry="7" fill="#DDB09A"/><path d="M8.4 10.5 C9 7 11.4 5.8 14 5.8 C16.4 5.8 18.6 7.4 19 10.5 C16.5 8.8 11.5 8.6 8.4 10.5 Z" fill="#1C1A1B"/><path d="M11 16.6 C12.6 18.4 14.8 18.4 16.4 16.6 Z" fill="#FFFFFF"/><circle cx="11.4" cy="12.6" r="0.7" fill="#3A2A22"/><circle cx="16" cy="12.6" r="0.7" fill="#3A2A22"/><path d="M12.4 25 L15.4 25 L15 28 L12.8 28 Z" fill="#2A2A30"/></g></svg>
<div class="t" style="left:82.50px;top:609.69px;font-size:11px;line-height:14px;font-weight:400;color:#164A5F;letter-spacing:0.000px;-webkit-text-stroke:0.35px #164A5F;transform:scaleX(1.0187);transform-origin:0 0;">Anna Martin</div>
<div class="t" style="left:82.50px;top:625.65px;font-size:8.8px;line-height:11px;font-weight:400;color:#8A9AAE;letter-spacing:0.000px;-webkit-text-stroke:0.15px #8A9AAE;transform:scaleX(1.0345);transform-origin:0 0;">Laura Martin’s mother</div>
<div class="r" style="left:289px;top:614px;width:39px;height:19px;background:#EDF2F9;border-radius:3px;"></div>
<div class="t" style="left:292.80px;top:616.59px;font-size:11px;line-height:14px;font-weight:400;color:#2A5670;letter-spacing:0.000px;-webkit-text-stroke:0.35px #2A5670;transform:scaleX(0.9631);transform-origin:0 0;">Parent</div>
<div class="t" style="left:389.30px;top:617.99px;font-size:11px;line-height:14px;font-weight:400;color:#164A5F;letter-spacing:0.000px;-webkit-text-stroke:0.25px #164A5F;transform:scaleX(1.0487);transform-origin:0 0;">04/Jan/23</div>
<div class="t" style="left:506.10px;top:617.99px;font-size:11px;line-height:14px;font-weight:400;color:#164A5F;letter-spacing:0.000px;-webkit-text-stroke:0.25px #164A5F;transform:scaleX(1.1445);transform-origin:0 0;">3/6</div>
<div class="t" style="left:612.80px;top:617.99px;font-size:11px;line-height:14px;font-weight:400;color:#164A5F;letter-spacing:0.000px;-webkit-text-stroke:0.25px #164A5F;transform:scaleX(1.0805);transform-origin:0 0;">04/Dec/23</div>
<svg class="a" style="left:740px;top:615.40px" width="120" height="20" viewBox="0 0 120 20"><path d="M12.80,0.40 L14.86,5.77 L20.60,6.07 L16.13,9.68 L17.62,15.23 L12.80,12.10 L7.98,15.23 L9.47,9.68 L5.00,6.07 L10.74,5.77 Z" fill="#FFC83A"/><path d="M34.80,0.40 L36.86,5.77 L42.60,6.07 L38.13,9.68 L39.62,15.23 L34.80,12.10 L29.98,15.23 L31.47,9.68 L27.00,6.07 L32.74,5.77 Z" fill="#D9D9D9"/><path d="M56.80,0.40 L58.86,5.77 L64.60,6.07 L60.13,9.68 L61.62,15.23 L56.80,12.10 L51.98,15.23 L53.47,9.68 L49.00,6.07 L54.74,5.77 Z" fill="#D9D9D9"/><path d="M78.80,0.40 L80.86,5.77 L86.60,6.07 L82.13,9.68 L83.62,15.23 L78.80,12.10 L73.98,15.23 L75.47,9.68 L71.00,6.07 L76.74,5.77 Z" fill="#D9D9D9"/><path d="M100.80,0.40 L102.86,5.77 L108.60,6.07 L104.13,9.68 L105.62,15.23 L100.80,12.10 L95.98,15.23 L97.47,9.68 L93.00,6.07 L98.74,5.77 Z" fill="#D9D9D9"/></svg>
<div class="r" style="left:920px;top:608px;width:96px;height:31px;background:#EDF2F9;border-radius:4px;"></div>
<div class="t" style="left:929.00px;top:617.79px;font-size:11px;line-height:14px;font-weight:400;color:#0D5E8C;letter-spacing:0.000px;-webkit-text-stroke:0.35px #0D5E8C;transform:scaleX(0.9915);transform-origin:0 0;">Voir évaluations</div>
<div class="r" style="left:407px;top:221px;width:47.5px;height:17px;background:#1A8FFA;border-radius:2px;"></div>
<div class="t" style="left:411.30px;top:224.53px;font-size:10px;line-height:12px;font-weight:400;color:#FFFFFF;letter-spacing:0.000px;-webkit-text-stroke:0.35px #FFFFFF;transform:scaleX(1.1501);transform-origin:0 0;">94 × 20</div>
<div class="r" style="left:847.9px;top:671.7px;width:24.2px;height:30.7px;background:#EDF2F9;border-radius:4px;"></div>
<div class="t" style="left:857.22px;top:681.31px;font-size:9.5px;line-height:12px;font-weight:700;color:#164A5F;letter-spacing:0.000px;">&lt;</div>
<div class="r" style="left:876px;top:671.7px;width:24.6px;height:30.7px;background:#FFFFFF;border-radius:4px;box-sizing:border-box;border:1px solid #EAF0F7;"></div>
<div class="t" style="left:884.97px;top:680.54px;font-size:12px;line-height:15px;font-weight:400;color:#164A5F;letter-spacing:0.000px;-webkit-text-stroke:0.35px #164A5F;">1</div>
<div class="r" style="left:904.4px;top:671.7px;width:24.2px;height:30.7px;background:#EDF2F9;border-radius:4px;"></div>
<div class="t" style="left:913.17px;top:680.54px;font-size:12px;line-height:15px;font-weight:400;color:#164A5F;letter-spacing:0.000px;-webkit-text-stroke:0.35px #164A5F;">2</div>
<div class="r" style="left:933px;top:671.7px;width:26px;height:30.7px;background:#EDF2F9;border-radius:4px;"></div>
<div class="t" style="left:941.41px;top:681.39px;font-size:11px;line-height:14px;font-weight:400;color:#164A5F;letter-spacing:0.000px;-webkit-text-stroke:0.35px #164A5F;">...</div>
<div class="r" style="left:962.9px;top:671.7px;width:24.2px;height:30.7px;background:#EDF2F9;border-radius:4px;"></div>
<div class="t" style="left:971.67px;top:680.54px;font-size:12px;line-height:15px;font-weight:400;color:#164A5F;letter-spacing:0.000px;-webkit-text-stroke:0.35px #164A5F;">8</div>
<div class="r" style="left:991.3px;top:671.7px;width:24.2px;height:30.7px;background:#EDF2F9;border-radius:4px;"></div>
<div class="t" style="left:1000.62px;top:681.31px;font-size:9.5px;line-height:12px;font-weight:700;color:#164A5F;letter-spacing:0.000px;">&gt;</div>
</body></html>
